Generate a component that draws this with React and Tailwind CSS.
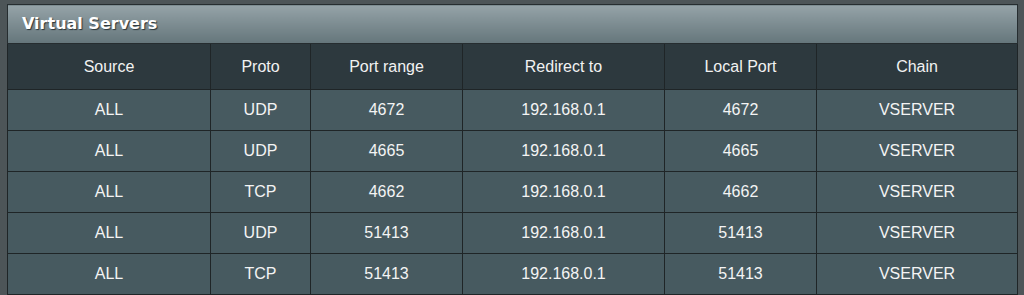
const columns = ['Source', 'Proto', 'Port range', 'Redirect to', 'Local Port', 'Chain']
const widths = ['w-[203px]', 'w-[100px]', 'w-[152px]', 'w-[202px]', 'w-[152px]', 'w-[201px]']

const rows = [
    ['ALL', 'UDP', '4672', '192.168.0.1', '4672', 'VSERVER'],
    ['ALL', 'UDP', '4665', '192.168.0.1', '4665', 'VSERVER'],
    ['ALL', 'TCP', '4662', '192.168.0.1', '4662', 'VSERVER'],
    ['ALL', 'UDP', '51413', '192.168.0.1', '51413', 'VSERVER'],
    ['ALL', 'TCP', '51413', '192.168.0.1', '51413', 'VSERVER'],
]

function App() {
    return (
        <div className="h-[295px] overflow-hidden bg-[#4d5558] pt-[4px] pl-[7px] font-['Liberation_Sans',Arial,sans-serif] text-[16px]">
            <table className="w-[1011px] border-collapse border border-[#262d30] table-fixed">
                <colgroup>
                    {widths.map((w, i) => <col key={i} className={w} />)}
                </colgroup>
                <thead>
                    <tr>
                        <th colSpan={6} className="h-[39px] px-[14px] text-left font-['DejaVu_Sans',Verdana,sans-serif] text-[16px] font-bold text-white bg-gradient-to-b from-[#95a3a8] to-[#65767b] border border-[#262d30] [text-shadow:1px_1px_1px_#2a3438]">
                            Virtual Servers
                        </th>
                    </tr>
                    <tr className="bg-[#2d393e]">
                        {columns.map(c => (
                            <th key={c} className="h-[46px] font-normal text-[#f2f2f2] border border-[#1f2527]">{c}</th>
                        ))}
                    </tr>
                </thead>
                <tbody>
                    {rows.map((r, ri) => (
                        <tr key={ri} className="bg-[#475a60]">
                            {r.map((v, ci) => (
                                <td key={ci} className="h-[41px] text-center text-[#f4f4f4] border border-[#1f2527]">{v}</td>
                            ))}
                        </tr>
                    ))}
                </tbody>
            </table>
        </div>
    )
}

export default App
